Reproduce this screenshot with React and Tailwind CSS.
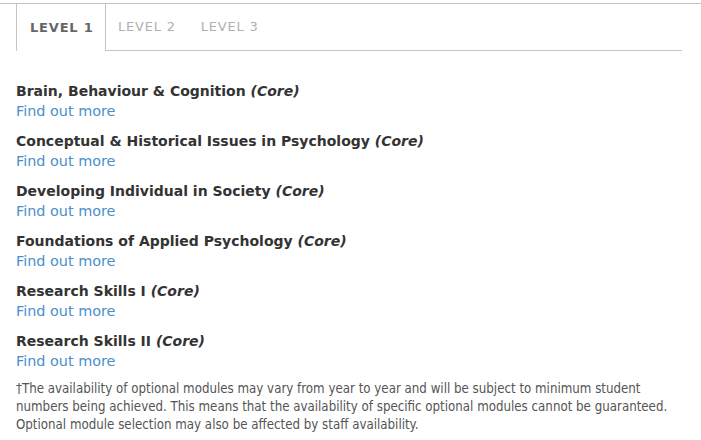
const modules = [
  'Brain, Behaviour & Cognition',
  'Conceptual & Historical Issues in Psychology',
  'Developing Individual in Society',
  'Foundations of Applied Psychology',
  'Research Skills I',
  'Research Skills II',
];

const App = () => {
  return (
    <div className="w-[701px] h-[440px] bg-white overflow-hidden pt-[3px]" style={{ fontFamily: '"DejaVu Sans", Verdana, sans-serif' }}>
      <div className="border-t border-[#c4c4c4]">
        <div className="flex pl-4 pr-[19px]">
          <div className="w-[90px] shrink-0 h-[47px] pl-[13px] flex items-center border-l border-r border-[#c4c4c4] text-[13px] font-bold text-[#666] tracking-[0.8px]">
            LEVEL 1
          </div>
          <div className="flex-1 flex items-center border-b border-[#c4c4c4] text-[13px] text-[#b0b0b0] tracking-[0.8px]">
            <span className="ml-[12px]">LEVEL 2</span>
            <span className="ml-[25px]">LEVEL 3</span>
          </div>
        </div>
      </div>

      <div className="px-4 pt-[30px]">
        {modules.map(m => (
          <div key={m} className="h-[50px]">
            <div className="text-[14px] leading-[20px] font-bold text-[#333]">
              {m} <em>(Core)</em>
            </div>
            <a className="block text-[14.4px] leading-[20px] text-[#4a8fcb]">Find out more</a>
          </div>
        ))}
        <p className="text-[13.2px] leading-[18px] text-[#555] -mt-[1px]" style={{ fontFamily: '"DejaVu Sans Condensed", Tahoma, sans-serif' }}>
          †The availability of optional modules may vary from year to year and will be subject to minimum student numbers being achieved. This means that the availability of specific optional modules cannot be guaranteed. Optional module selection may also be affected by staff availability.
        </p>
      </div>
    </div>
  );
};

export default App;
